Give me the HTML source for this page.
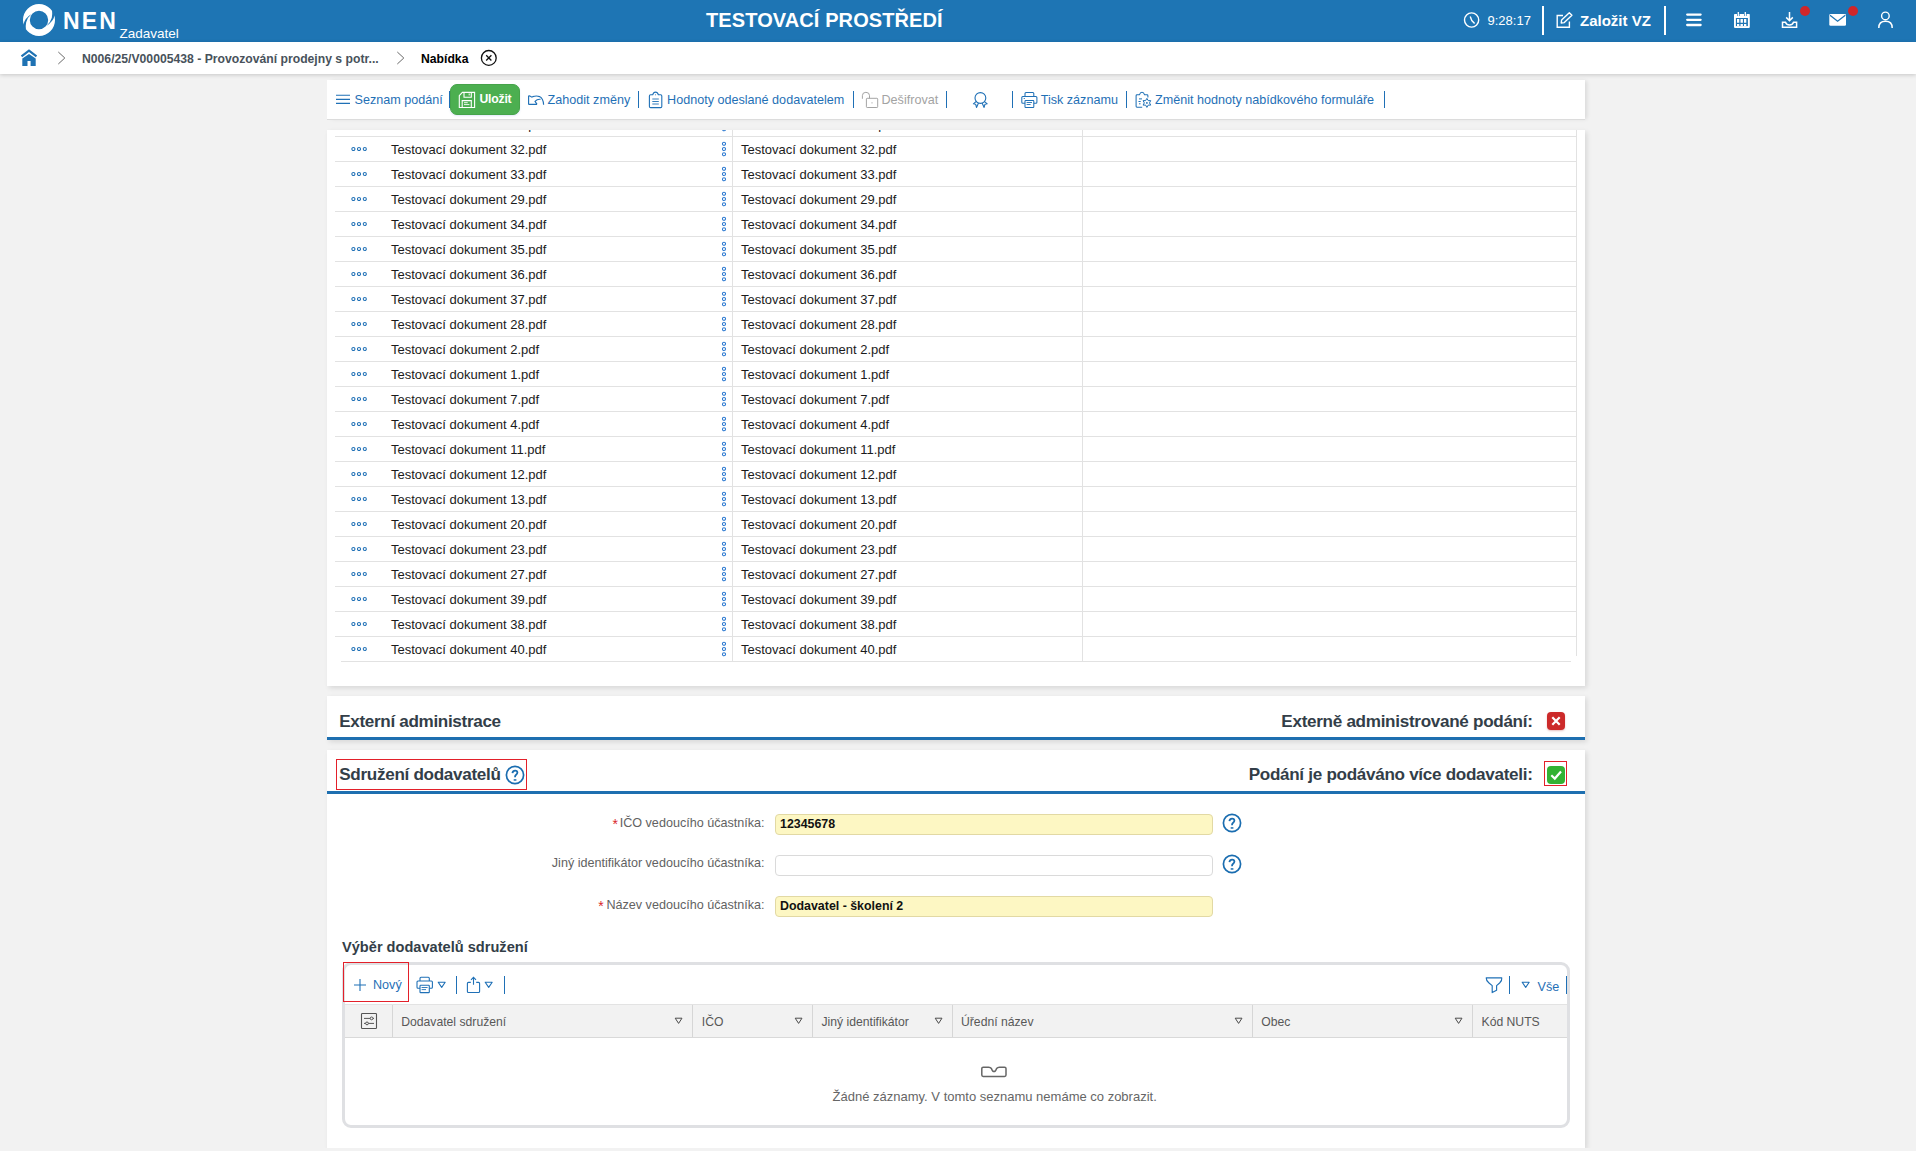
<!DOCTYPE html>
<html><head><meta charset="utf-8">
<style>
*{box-sizing:border-box}
html,body{margin:0;padding:0}
body{width:1916px;height:1151px;overflow:hidden;position:relative;background:#f2f2f2;font-family:"Liberation Sans",sans-serif;color:#1a1a1a}
.a{position:absolute;white-space:nowrap}
svg{position:absolute;overflow:visible}
#hdr{left:0;top:0;width:1916px;height:42px;background:#1e75b4}
#bc{left:0;top:42px;width:1916px;height:32px;background:#fff;box-shadow:0 1px 4px rgba(0,0,0,.18)}
.panel{position:absolute;background:#fff;box-shadow:2px 2px 5px rgba(0,0,0,.11)}
.tb{font-size:12.6px;color:#1f70b6;line-height:12.6px;margin-top:1px}
.sep{position:absolute;width:1px;background:#1f70b6}
.hl{position:absolute;height:1px;background:#e2e2e2}
.vl{position:absolute;width:1px;background:#e2e2e2}
.cell{font-size:13px;color:#1b1b1b;line-height:13px}
</style></head><body>
<div id="hdr" class="a">
<svg style="left:0;top:0" width="70" height="42" viewBox="0 0 70 42">
<circle cx="39" cy="20" r="12.6" fill="none" stroke="#fff" stroke-width="6.8"/>
<path d="M20 23.2 L23.2 24.7 Q25.2 17.8 31.6 14.1 Q27.4 17.6 26.2 22.2 Q25.5 25.6 25.9 28.8 L21 31 Z" fill="#1e75b4"/>
<path d="M58 16.8 L54.8 15.3 Q52.8 22.2 46.4 25.9 Q50.6 22.4 51.8 17.8 Q52.5 14.4 52.1 11.2 L57 9 Z" fill="#1e75b4"/>
</svg>
<div class="a" style="left:63px;top:10.4px;font-size:23px;line-height:23px;font-weight:700;color:#fff;letter-spacing:2.2px">NEN</div>
<div class="a" style="left:119.5px;top:26.9px;font-size:13.5px;line-height:13.5px;color:#fff">Zadavatel</div>
<div class="a" style="left:706px;top:10.1px;font-size:20px;line-height:20px;font-weight:700;color:#fff;letter-spacing:0.1px">TESTOVACÍ PROSTŘEDÍ</div>
<svg style="left:1463px;top:12px" width="18" height="18" viewBox="0 0 18 18"><circle cx="8.6" cy="8" r="7.1" fill="none" stroke="#fff" stroke-width="1.4"/><path d="M7.2 4.6 L8.8 8.6 L11.6 11.4" fill="none" stroke="#fff" stroke-width="1.4"/></svg>
<div class="a" style="left:1487.5px;top:14.1px;font-size:13px;line-height:13px;color:#fff">9:28:17</div>
<div class="a" style="left:1542px;top:6px;width:2px;height:29px;background:#fff"></div>
<svg style="left:1556px;top:12px" width="18" height="17" viewBox="0 0 18 17"><path d="M7 3.5 H1.2 V15.3 H13.4 V9.5" fill="none" stroke="#fff" stroke-width="1.4"/><path d="M5.2 11 L5.6 8 L13.3 0.8 L15.9 3.3 L8.3 10.6 Z" fill="none" stroke="#fff" stroke-width="1.4" stroke-linejoin="round"/></svg>
<div class="a" style="left:1580px;top:13.3px;font-size:15px;line-height:15px;font-weight:700;color:#fff">Založit VZ</div>
<div class="a" style="left:1664px;top:6px;width:2px;height:29px;background:#fff"></div>
<svg style="left:1686px;top:13px" width="17" height="14" viewBox="0 0 17 14"><path d="M1.2 1.6 H14.6 M1.2 6.8 H14.6 M1.2 12 H14.6" stroke="#fff" stroke-width="2.3" stroke-linecap="round"/></svg>
<svg style="left:1728px;top:6px" width="28" height="26" viewBox="0 0 28 26"><path d="M6.8 7.9 H21 Q21.8 7.9 21.8 8.7 V21.1 Q21.8 21.9 21 21.9 H6.8 Q6 21.9 6 21.1 V8.7 Q6 7.9 6.8 7.9 Z" fill="#fff"/><rect x="7.9" y="12" width="12" height="8.1" fill="#1e75b4"/><path d="M9 13.1h2.3v3.6h-2.3zM12.5 13.1h2.4v3.6h-2.4zM16 13.1h2.3v3.6h-2.3zM9 18h2.3v2.1h-2.3zM12.5 18h2.4v2.1h-2.4zM16 18h2.3v2.1h-2.3z" fill="#fff"/><path d="M10.3 6.1 V9.9 M17.3 6.1 V9.9" stroke="#1e75b4" stroke-width="2.6"/><path d="M10.3 6.1 V9.9 M17.3 6.1 V9.9" stroke="#fff" stroke-width="1.3"/></svg>
<svg style="left:1781px;top:11px" width="18" height="18" viewBox="0 0 18 18"><path d="M8.5 1 V9.6 M5.2 6.4 L8.5 9.7 L11.8 6.4" fill="none" stroke="#fff" stroke-width="1.5"/><path d="M1.5 10.6 V16.2 H15.6 V10.6 M1.5 11.3 H4.5 Q5.5 14 8.5 14 Q11.5 14 12.5 11.3 H15.6" fill="none" stroke="#fff" stroke-width="1.5"/></svg>
<div class="a" style="left:1800px;top:6px;width:10px;height:10px;border-radius:50%;background:#d0262a"></div>
<svg style="left:1829px;top:14px" width="18" height="13" viewBox="0 0 18 13"><rect x="0.3" y="0" width="16.7" height="11.8" rx="1.3" fill="#fff"/><path d="M1 1.2 L8.6 7.2 L16.3 1.2" fill="none" stroke="#1e75b4" stroke-width="1.3"/></svg>
<div class="a" style="left:1848px;top:6px;width:10px;height:10px;border-radius:50%;background:#d0262a"></div>
<svg style="left:1872px;top:6px" width="28" height="26" viewBox="0 0 28 26"><circle cx="13.4" cy="9.9" r="3.8" fill="none" stroke="#fff" stroke-width="1.4"/><path d="M6.8 21.9 Q6.8 15.3 13.5 15.3 Q20.2 15.3 20.2 21.9" fill="none" stroke="#fff" stroke-width="1.5"/></svg>
</div>
<div id="bc" class="a"></div>
<svg style="left:20px;top:49px" width="18" height="18" viewBox="0 0 18 18"><path d="M1.5 7.4 L9 1.6 L16.5 7.4" fill="none" stroke="#1e72b3" stroke-width="2.1" stroke-linejoin="miter"/><path d="M2.3 9.6 L9 4.9 L15.7 9.6 V16.9 H10.6 V12 H7.5 V16.9 H2.3 Z" fill="#1e72b3"/></svg>
<svg style="left:57px;top:51px" width="10" height="14" viewBox="0 0 10 14"><path d="M1.3 1 L7.8 7 L1.3 13" fill="none" stroke="#6a6a6a" stroke-width="1"/></svg>
<div class="a" style="left:82px;top:53.2px;font-size:12.2px;line-height:12.2px;font-weight:700;color:#48525b">N006/25/V00005438 - Provozování prodejny s potr...</div>
<svg style="left:396px;top:51px" width="10" height="14" viewBox="0 0 10 14"><path d="M1.3 1 L7.8 7 L1.3 13" fill="none" stroke="#6a6a6a" stroke-width="1"/></svg>
<div class="a" style="left:421px;top:53.2px;font-size:12.2px;line-height:12.2px;font-weight:700;color:#000">Nabídka</div>
<svg style="left:480px;top:49px" width="18" height="18" viewBox="0 0 18 18"><circle cx="8.8" cy="8.9" r="7.4" fill="none" stroke="#111" stroke-width="1.3"/><path d="M6.2 6.3 L11.4 11.5 M11.4 6.3 L6.2 11.5" stroke="#111" stroke-width="1.3"/></svg>


<!-- toolbar panel -->
<div class="panel" style="left:327px;top:80px;width:1258px;height:40px;border-bottom:1px solid #dcdcdc;box-shadow:3px 0 4px -1px rgba(0,0,0,.1)"></div>

<!-- toolbar content -->
<svg style="left:335px;top:94px" width="16" height="11" viewBox="0 0 16 11"><path d="M1 1.3 H15 M1 5.4 H15 M1 9.4 H15" stroke="#1f70b6" stroke-width="1.1"/></svg>
<div class="a tb" style="left:354.6px;top:93.1px">Seznam podání</div>
<div class="sep" style="left:449px;top:91px;height:17px"></div>
<div class="a" style="left:450px;top:84px;width:70px;height:31px;background:#4caf50;border:1px solid #46a34a;border-radius:7px;box-shadow:0 1px 2px rgba(60,100,200,.15)"></div>
<svg style="left:458px;top:91px" width="18" height="18" viewBox="0 0 18 18"><path d="M1.3 4.7 L4.4 1.4 H16.6 V16.5 H1.3 Z" fill="none" stroke="#fff" stroke-width="1.1"/><path d="M6 1.4 V6.2 H13.3 V1.4" fill="none" stroke="#fff" stroke-width="1.1"/><path d="M11.2 2.5 V4.4" stroke="#fff" stroke-width="1"/><path d="M4.2 16.5 V9.6 H13.3 V16.5" fill="none" stroke="#fff" stroke-width="1.1"/><path d="M6 11.7 H9.7 M6 13.6 H11.4" stroke="#fff" stroke-width="0.9"/></svg>
<div class="a" style="left:479.5px;top:93.1px;font-size:12.2px;line-height:12.2px;font-weight:700;color:#fff;letter-spacing:-0.2px">Uložit</div>
<svg style="left:524px;top:86px" width="24" height="26" viewBox="0 0 24 26"><path d="M4.6 18.4 V10 Q5.6 9.6 6.6 10.4 Q7.6 11.6 8.8 10.6 Q12.5 9.4 15.5 10.6 Q19.3 12.4 19.6 18.8" fill="none" stroke="#1f70b6" stroke-width="1.15" stroke-linejoin="round"/><path d="M16.6 13.3 Q13.4 12.8 11 15.4 L12.8 17.8 L12.5 18.4 H4.6" fill="none" stroke="#1f70b6" stroke-width="1.15" stroke-linejoin="round"/></svg>
<div class="a tb" style="left:547.6px;top:93.1px">Zahodit změny</div>
<div class="sep" style="left:638px;top:91px;height:17px"></div>
<svg style="left:644px;top:86px" width="24" height="26" viewBox="0 0 24 26"><path d="M8.7 8.8 H6.6 Q5.4 8.8 5.4 10 V20.4 Q5.4 21.6 6.6 21.6 H16.6 Q17.8 21.6 17.8 20.4 V10 Q17.8 8.8 16.6 8.8 H14.4 Q13.6 6.1 11.5 6.1 Q9.5 6.1 8.7 8.8 Z" fill="none" stroke="#1f70b6" stroke-width="1.1" stroke-linejoin="round"/><circle cx="11.5" cy="8.7" r="0.5" fill="#1f70b6"/><path d="M8.3 13 H14.8 M8.3 15.5 H14.8 M8.3 18 H14.8" stroke="#1f70b6" stroke-width="0.9"/></svg>
<div class="a tb" style="left:667.1px;top:93.1px">Hodnoty odeslané dodavatelem</div>
<div class="sep" style="left:853px;top:91px;height:17px"></div>
<svg style="left:856px;top:86px" width="24" height="26" viewBox="0 0 24 26"><path d="M6.4 12.8 V9.6 Q6.4 6.3 9.9 6.3 Q13.5 6.3 13.5 9.6 V12.3" fill="none" stroke="#9a9a9a" stroke-width="0.9"/><rect x="10.4" y="12.3" width="11.3" height="9.2" rx="0.8" fill="none" stroke="#9a9a9a" stroke-width="0.9"/><path d="M16 16 V17.6" stroke="#b0b0b0" stroke-width="0.8"/></svg>
<div class="a tb" style="left:881.5px;top:93.1px;color:#a3a3a3">Dešifrovat</div>
<div class="sep" style="left:946px;top:91px;height:17px"></div>
<svg style="left:960px;top:86px" width="40" height="26" viewBox="0 0 40 26"><circle cx="20.4" cy="12" r="5.4" fill="none" stroke="#1f70b6" stroke-width="1.1"/><path d="M16.3 15.3 L13.4 17.8 L15.6 18.2 L16.5 21.4 L18.5 17" fill="none" stroke="#1f70b6" stroke-width="1.1" stroke-linejoin="round"/><path d="M24.3 15.3 L27.2 17.8 L25 18.2 L24.1 21.4 L22.1 17" fill="none" stroke="#1f70b6" stroke-width="1.1" stroke-linejoin="round"/></svg>
<div class="sep" style="left:1012px;top:91px;height:17px"></div>
<svg style="left:1016px;top:86px" width="24" height="26" viewBox="0 0 24 26"><path d="M9 10.2 V7.4 Q9 6.4 10 6.4 H16.8 Q17.8 6.4 17.8 7.4 V10.2" fill="none" stroke="#1f70b6" stroke-width="1.05"/><path d="M9 17.3 H6.8 Q5.8 17.3 5.8 16.3 V11.5 Q5.8 10.5 6.8 10.5 H19.9 Q20.9 10.5 20.9 11.5 V16.3 Q20.9 17.3 19.9 17.3 H17.8" fill="none" stroke="#1f70b6" stroke-width="1.05"/><rect x="9" y="14.5" width="8.8" height="7" rx="0.7" fill="none" stroke="#1f70b6" stroke-width="1.05"/><path d="M10.6 16.5 H16 M10.6 18.5 H14.6 M7.7 12.5 H8.9" stroke="#1f70b6" stroke-width="0.9"/></svg>
<div class="a tb" style="left:1040.7px;top:93.1px">Tisk záznamu</div>
<div class="sep" style="left:1126px;top:91px;height:17px"></div>
<svg style="left:1130px;top:86px" width="24" height="26" viewBox="0 0 24 26"><path d="M12.2 21.2 H7 Q6.1 21.2 6.1 20.3 V9.7 Q6.1 8.8 7 8.8 H9.4 Q10.2 6.3 12 6.3 Q13.8 6.3 14.6 8.8 H17 Q17.9 8.8 17.9 9.7 V11.6" fill="none" stroke="#1f70b6" stroke-width="1.05"/><path d="M9 12.9 H12 M8.5 15.5 H10.7 M9 17.8 H10.5" stroke="#1f70b6" stroke-width="1"/><path d="M16.9 12.4 L18.2 14.6 L20.7 14.6 L19.5 16.9 L20.7 19.1 L18.2 19.1 L16.9 21.4 L15.6 19.1 L13.1 19.1 L14.3 16.9 L13.1 14.6 L15.6 14.6 Z" fill="none" stroke="#1f70b6" stroke-width="1" stroke-linejoin="round"/><circle cx="16.9" cy="16.9" r="0.9" fill="#1f70b6"/></svg>
<div class="a tb" style="left:1155px;top:93.1px">Změnit hodnoty nabídkového formuláře</div>
<div class="sep" style="left:1384px;top:91px;height:17px"></div>
<!-- table panel -->
<div class="panel" style="left:327px;top:130px;width:1258px;height:556px"></div>
<div class="a" style="left:327px;top:130px;width:1258px;height:556px;overflow:hidden">
<div class="hl" style="left:8px;top:6px;width:1241px"></div>
<div class="hl" style="left:8px;top:31px;width:1241px"></div>
<div class="hl" style="left:8px;top:56px;width:1241px"></div>
<div class="hl" style="left:8px;top:81px;width:1241px"></div>
<div class="hl" style="left:8px;top:106px;width:1241px"></div>
<div class="hl" style="left:8px;top:131px;width:1241px"></div>
<div class="hl" style="left:8px;top:156px;width:1241px"></div>
<div class="hl" style="left:8px;top:181px;width:1241px"></div>
<div class="hl" style="left:8px;top:206px;width:1241px"></div>
<div class="hl" style="left:8px;top:231px;width:1241px"></div>
<div class="hl" style="left:8px;top:256px;width:1241px"></div>
<div class="hl" style="left:8px;top:281px;width:1241px"></div>
<div class="hl" style="left:8px;top:306px;width:1241px"></div>
<div class="hl" style="left:8px;top:331px;width:1241px"></div>
<div class="hl" style="left:8px;top:356px;width:1241px"></div>
<div class="hl" style="left:8px;top:381px;width:1241px"></div>
<div class="hl" style="left:8px;top:406px;width:1241px"></div>
<div class="hl" style="left:8px;top:431px;width:1241px"></div>
<div class="hl" style="left:8px;top:456px;width:1241px"></div>
<div class="hl" style="left:8px;top:481px;width:1241px"></div>
<div class="hl" style="left:8px;top:506px;width:1241px"></div>
<div class="hl" style="left:14px;top:531px;width:1230px"></div>
<div class="vl" style="left:405px;top:0;height:531px"></div>
<div class="vl" style="left:755px;top:0;height:531px"></div>
<div class="vl" style="left:1249px;top:0;height:526px"></div>
<svg style="left:24px;top:-9px" width="17" height="6" viewBox="0 0 17 6"><circle cx="2.4" cy="3" r="1.55" fill="none" stroke="#1f70b6" stroke-width="1.05"/><circle cx="8" cy="3" r="1.55" fill="none" stroke="#1f70b6" stroke-width="1.05"/><circle cx="13.8" cy="3" r="1.55" fill="none" stroke="#1f70b6" stroke-width="1.05"/></svg>
<div class="a cell" style="left:64px;top:-12.3px">Testovací dokument 39.pdf</div>
<svg style="left:394px;top:-14px" width="6" height="16" viewBox="0 0 6 16"><circle cx="3" cy="2.7" r="1.55" fill="none" stroke="#2a78d0" stroke-width="1.05"/><circle cx="3" cy="8" r="1.55" fill="none" stroke="#2a78d0" stroke-width="1.05"/><circle cx="3" cy="13.2" r="1.55" fill="none" stroke="#2a78d0" stroke-width="1.05"/></svg>
<div class="a cell" style="left:414px;top:-12.3px">Testovací dokument 39.pdf</div>
<svg style="left:24px;top:16px" width="17" height="6" viewBox="0 0 17 6"><circle cx="2.4" cy="3" r="1.55" fill="none" stroke="#1f70b6" stroke-width="1.05"/><circle cx="8" cy="3" r="1.55" fill="none" stroke="#1f70b6" stroke-width="1.05"/><circle cx="13.8" cy="3" r="1.55" fill="none" stroke="#1f70b6" stroke-width="1.05"/></svg>
<div class="a cell" style="left:64px;top:12.7px">Testovací dokument 32.pdf</div>
<svg style="left:394px;top:11px" width="6" height="16" viewBox="0 0 6 16"><circle cx="3" cy="2.7" r="1.55" fill="none" stroke="#2a78d0" stroke-width="1.05"/><circle cx="3" cy="8" r="1.55" fill="none" stroke="#2a78d0" stroke-width="1.05"/><circle cx="3" cy="13.2" r="1.55" fill="none" stroke="#2a78d0" stroke-width="1.05"/></svg>
<div class="a cell" style="left:414px;top:12.7px">Testovací dokument 32.pdf</div>
<svg style="left:24px;top:41px" width="17" height="6" viewBox="0 0 17 6"><circle cx="2.4" cy="3" r="1.55" fill="none" stroke="#1f70b6" stroke-width="1.05"/><circle cx="8" cy="3" r="1.55" fill="none" stroke="#1f70b6" stroke-width="1.05"/><circle cx="13.8" cy="3" r="1.55" fill="none" stroke="#1f70b6" stroke-width="1.05"/></svg>
<div class="a cell" style="left:64px;top:37.7px">Testovací dokument 33.pdf</div>
<svg style="left:394px;top:36px" width="6" height="16" viewBox="0 0 6 16"><circle cx="3" cy="2.7" r="1.55" fill="none" stroke="#2a78d0" stroke-width="1.05"/><circle cx="3" cy="8" r="1.55" fill="none" stroke="#2a78d0" stroke-width="1.05"/><circle cx="3" cy="13.2" r="1.55" fill="none" stroke="#2a78d0" stroke-width="1.05"/></svg>
<div class="a cell" style="left:414px;top:37.7px">Testovací dokument 33.pdf</div>
<svg style="left:24px;top:66px" width="17" height="6" viewBox="0 0 17 6"><circle cx="2.4" cy="3" r="1.55" fill="none" stroke="#1f70b6" stroke-width="1.05"/><circle cx="8" cy="3" r="1.55" fill="none" stroke="#1f70b6" stroke-width="1.05"/><circle cx="13.8" cy="3" r="1.55" fill="none" stroke="#1f70b6" stroke-width="1.05"/></svg>
<div class="a cell" style="left:64px;top:62.7px">Testovací dokument 29.pdf</div>
<svg style="left:394px;top:61px" width="6" height="16" viewBox="0 0 6 16"><circle cx="3" cy="2.7" r="1.55" fill="none" stroke="#2a78d0" stroke-width="1.05"/><circle cx="3" cy="8" r="1.55" fill="none" stroke="#2a78d0" stroke-width="1.05"/><circle cx="3" cy="13.2" r="1.55" fill="none" stroke="#2a78d0" stroke-width="1.05"/></svg>
<div class="a cell" style="left:414px;top:62.7px">Testovací dokument 29.pdf</div>
<svg style="left:24px;top:91px" width="17" height="6" viewBox="0 0 17 6"><circle cx="2.4" cy="3" r="1.55" fill="none" stroke="#1f70b6" stroke-width="1.05"/><circle cx="8" cy="3" r="1.55" fill="none" stroke="#1f70b6" stroke-width="1.05"/><circle cx="13.8" cy="3" r="1.55" fill="none" stroke="#1f70b6" stroke-width="1.05"/></svg>
<div class="a cell" style="left:64px;top:87.7px">Testovací dokument 34.pdf</div>
<svg style="left:394px;top:86px" width="6" height="16" viewBox="0 0 6 16"><circle cx="3" cy="2.7" r="1.55" fill="none" stroke="#2a78d0" stroke-width="1.05"/><circle cx="3" cy="8" r="1.55" fill="none" stroke="#2a78d0" stroke-width="1.05"/><circle cx="3" cy="13.2" r="1.55" fill="none" stroke="#2a78d0" stroke-width="1.05"/></svg>
<div class="a cell" style="left:414px;top:87.7px">Testovací dokument 34.pdf</div>
<svg style="left:24px;top:116px" width="17" height="6" viewBox="0 0 17 6"><circle cx="2.4" cy="3" r="1.55" fill="none" stroke="#1f70b6" stroke-width="1.05"/><circle cx="8" cy="3" r="1.55" fill="none" stroke="#1f70b6" stroke-width="1.05"/><circle cx="13.8" cy="3" r="1.55" fill="none" stroke="#1f70b6" stroke-width="1.05"/></svg>
<div class="a cell" style="left:64px;top:112.7px">Testovací dokument 35.pdf</div>
<svg style="left:394px;top:111px" width="6" height="16" viewBox="0 0 6 16"><circle cx="3" cy="2.7" r="1.55" fill="none" stroke="#2a78d0" stroke-width="1.05"/><circle cx="3" cy="8" r="1.55" fill="none" stroke="#2a78d0" stroke-width="1.05"/><circle cx="3" cy="13.2" r="1.55" fill="none" stroke="#2a78d0" stroke-width="1.05"/></svg>
<div class="a cell" style="left:414px;top:112.7px">Testovací dokument 35.pdf</div>
<svg style="left:24px;top:141px" width="17" height="6" viewBox="0 0 17 6"><circle cx="2.4" cy="3" r="1.55" fill="none" stroke="#1f70b6" stroke-width="1.05"/><circle cx="8" cy="3" r="1.55" fill="none" stroke="#1f70b6" stroke-width="1.05"/><circle cx="13.8" cy="3" r="1.55" fill="none" stroke="#1f70b6" stroke-width="1.05"/></svg>
<div class="a cell" style="left:64px;top:137.7px">Testovací dokument 36.pdf</div>
<svg style="left:394px;top:136px" width="6" height="16" viewBox="0 0 6 16"><circle cx="3" cy="2.7" r="1.55" fill="none" stroke="#2a78d0" stroke-width="1.05"/><circle cx="3" cy="8" r="1.55" fill="none" stroke="#2a78d0" stroke-width="1.05"/><circle cx="3" cy="13.2" r="1.55" fill="none" stroke="#2a78d0" stroke-width="1.05"/></svg>
<div class="a cell" style="left:414px;top:137.7px">Testovací dokument 36.pdf</div>
<svg style="left:24px;top:166px" width="17" height="6" viewBox="0 0 17 6"><circle cx="2.4" cy="3" r="1.55" fill="none" stroke="#1f70b6" stroke-width="1.05"/><circle cx="8" cy="3" r="1.55" fill="none" stroke="#1f70b6" stroke-width="1.05"/><circle cx="13.8" cy="3" r="1.55" fill="none" stroke="#1f70b6" stroke-width="1.05"/></svg>
<div class="a cell" style="left:64px;top:162.7px">Testovací dokument 37.pdf</div>
<svg style="left:394px;top:161px" width="6" height="16" viewBox="0 0 6 16"><circle cx="3" cy="2.7" r="1.55" fill="none" stroke="#2a78d0" stroke-width="1.05"/><circle cx="3" cy="8" r="1.55" fill="none" stroke="#2a78d0" stroke-width="1.05"/><circle cx="3" cy="13.2" r="1.55" fill="none" stroke="#2a78d0" stroke-width="1.05"/></svg>
<div class="a cell" style="left:414px;top:162.7px">Testovací dokument 37.pdf</div>
<svg style="left:24px;top:191px" width="17" height="6" viewBox="0 0 17 6"><circle cx="2.4" cy="3" r="1.55" fill="none" stroke="#1f70b6" stroke-width="1.05"/><circle cx="8" cy="3" r="1.55" fill="none" stroke="#1f70b6" stroke-width="1.05"/><circle cx="13.8" cy="3" r="1.55" fill="none" stroke="#1f70b6" stroke-width="1.05"/></svg>
<div class="a cell" style="left:64px;top:187.7px">Testovací dokument 28.pdf</div>
<svg style="left:394px;top:186px" width="6" height="16" viewBox="0 0 6 16"><circle cx="3" cy="2.7" r="1.55" fill="none" stroke="#2a78d0" stroke-width="1.05"/><circle cx="3" cy="8" r="1.55" fill="none" stroke="#2a78d0" stroke-width="1.05"/><circle cx="3" cy="13.2" r="1.55" fill="none" stroke="#2a78d0" stroke-width="1.05"/></svg>
<div class="a cell" style="left:414px;top:187.7px">Testovací dokument 28.pdf</div>
<svg style="left:24px;top:216px" width="17" height="6" viewBox="0 0 17 6"><circle cx="2.4" cy="3" r="1.55" fill="none" stroke="#1f70b6" stroke-width="1.05"/><circle cx="8" cy="3" r="1.55" fill="none" stroke="#1f70b6" stroke-width="1.05"/><circle cx="13.8" cy="3" r="1.55" fill="none" stroke="#1f70b6" stroke-width="1.05"/></svg>
<div class="a cell" style="left:64px;top:212.7px">Testovací dokument 2.pdf</div>
<svg style="left:394px;top:211px" width="6" height="16" viewBox="0 0 6 16"><circle cx="3" cy="2.7" r="1.55" fill="none" stroke="#2a78d0" stroke-width="1.05"/><circle cx="3" cy="8" r="1.55" fill="none" stroke="#2a78d0" stroke-width="1.05"/><circle cx="3" cy="13.2" r="1.55" fill="none" stroke="#2a78d0" stroke-width="1.05"/></svg>
<div class="a cell" style="left:414px;top:212.7px">Testovací dokument 2.pdf</div>
<svg style="left:24px;top:241px" width="17" height="6" viewBox="0 0 17 6"><circle cx="2.4" cy="3" r="1.55" fill="none" stroke="#1f70b6" stroke-width="1.05"/><circle cx="8" cy="3" r="1.55" fill="none" stroke="#1f70b6" stroke-width="1.05"/><circle cx="13.8" cy="3" r="1.55" fill="none" stroke="#1f70b6" stroke-width="1.05"/></svg>
<div class="a cell" style="left:64px;top:237.7px">Testovací dokument 1.pdf</div>
<svg style="left:394px;top:236px" width="6" height="16" viewBox="0 0 6 16"><circle cx="3" cy="2.7" r="1.55" fill="none" stroke="#2a78d0" stroke-width="1.05"/><circle cx="3" cy="8" r="1.55" fill="none" stroke="#2a78d0" stroke-width="1.05"/><circle cx="3" cy="13.2" r="1.55" fill="none" stroke="#2a78d0" stroke-width="1.05"/></svg>
<div class="a cell" style="left:414px;top:237.7px">Testovací dokument 1.pdf</div>
<svg style="left:24px;top:266px" width="17" height="6" viewBox="0 0 17 6"><circle cx="2.4" cy="3" r="1.55" fill="none" stroke="#1f70b6" stroke-width="1.05"/><circle cx="8" cy="3" r="1.55" fill="none" stroke="#1f70b6" stroke-width="1.05"/><circle cx="13.8" cy="3" r="1.55" fill="none" stroke="#1f70b6" stroke-width="1.05"/></svg>
<div class="a cell" style="left:64px;top:262.7px">Testovací dokument 7.pdf</div>
<svg style="left:394px;top:261px" width="6" height="16" viewBox="0 0 6 16"><circle cx="3" cy="2.7" r="1.55" fill="none" stroke="#2a78d0" stroke-width="1.05"/><circle cx="3" cy="8" r="1.55" fill="none" stroke="#2a78d0" stroke-width="1.05"/><circle cx="3" cy="13.2" r="1.55" fill="none" stroke="#2a78d0" stroke-width="1.05"/></svg>
<div class="a cell" style="left:414px;top:262.7px">Testovací dokument 7.pdf</div>
<svg style="left:24px;top:291px" width="17" height="6" viewBox="0 0 17 6"><circle cx="2.4" cy="3" r="1.55" fill="none" stroke="#1f70b6" stroke-width="1.05"/><circle cx="8" cy="3" r="1.55" fill="none" stroke="#1f70b6" stroke-width="1.05"/><circle cx="13.8" cy="3" r="1.55" fill="none" stroke="#1f70b6" stroke-width="1.05"/></svg>
<div class="a cell" style="left:64px;top:287.7px">Testovací dokument 4.pdf</div>
<svg style="left:394px;top:286px" width="6" height="16" viewBox="0 0 6 16"><circle cx="3" cy="2.7" r="1.55" fill="none" stroke="#2a78d0" stroke-width="1.05"/><circle cx="3" cy="8" r="1.55" fill="none" stroke="#2a78d0" stroke-width="1.05"/><circle cx="3" cy="13.2" r="1.55" fill="none" stroke="#2a78d0" stroke-width="1.05"/></svg>
<div class="a cell" style="left:414px;top:287.7px">Testovací dokument 4.pdf</div>
<svg style="left:24px;top:316px" width="17" height="6" viewBox="0 0 17 6"><circle cx="2.4" cy="3" r="1.55" fill="none" stroke="#1f70b6" stroke-width="1.05"/><circle cx="8" cy="3" r="1.55" fill="none" stroke="#1f70b6" stroke-width="1.05"/><circle cx="13.8" cy="3" r="1.55" fill="none" stroke="#1f70b6" stroke-width="1.05"/></svg>
<div class="a cell" style="left:64px;top:312.7px">Testovací dokument 11.pdf</div>
<svg style="left:394px;top:311px" width="6" height="16" viewBox="0 0 6 16"><circle cx="3" cy="2.7" r="1.55" fill="none" stroke="#2a78d0" stroke-width="1.05"/><circle cx="3" cy="8" r="1.55" fill="none" stroke="#2a78d0" stroke-width="1.05"/><circle cx="3" cy="13.2" r="1.55" fill="none" stroke="#2a78d0" stroke-width="1.05"/></svg>
<div class="a cell" style="left:414px;top:312.7px">Testovací dokument 11.pdf</div>
<svg style="left:24px;top:341px" width="17" height="6" viewBox="0 0 17 6"><circle cx="2.4" cy="3" r="1.55" fill="none" stroke="#1f70b6" stroke-width="1.05"/><circle cx="8" cy="3" r="1.55" fill="none" stroke="#1f70b6" stroke-width="1.05"/><circle cx="13.8" cy="3" r="1.55" fill="none" stroke="#1f70b6" stroke-width="1.05"/></svg>
<div class="a cell" style="left:64px;top:337.7px">Testovací dokument 12.pdf</div>
<svg style="left:394px;top:336px" width="6" height="16" viewBox="0 0 6 16"><circle cx="3" cy="2.7" r="1.55" fill="none" stroke="#2a78d0" stroke-width="1.05"/><circle cx="3" cy="8" r="1.55" fill="none" stroke="#2a78d0" stroke-width="1.05"/><circle cx="3" cy="13.2" r="1.55" fill="none" stroke="#2a78d0" stroke-width="1.05"/></svg>
<div class="a cell" style="left:414px;top:337.7px">Testovací dokument 12.pdf</div>
<svg style="left:24px;top:366px" width="17" height="6" viewBox="0 0 17 6"><circle cx="2.4" cy="3" r="1.55" fill="none" stroke="#1f70b6" stroke-width="1.05"/><circle cx="8" cy="3" r="1.55" fill="none" stroke="#1f70b6" stroke-width="1.05"/><circle cx="13.8" cy="3" r="1.55" fill="none" stroke="#1f70b6" stroke-width="1.05"/></svg>
<div class="a cell" style="left:64px;top:362.7px">Testovací dokument 13.pdf</div>
<svg style="left:394px;top:361px" width="6" height="16" viewBox="0 0 6 16"><circle cx="3" cy="2.7" r="1.55" fill="none" stroke="#2a78d0" stroke-width="1.05"/><circle cx="3" cy="8" r="1.55" fill="none" stroke="#2a78d0" stroke-width="1.05"/><circle cx="3" cy="13.2" r="1.55" fill="none" stroke="#2a78d0" stroke-width="1.05"/></svg>
<div class="a cell" style="left:414px;top:362.7px">Testovací dokument 13.pdf</div>
<svg style="left:24px;top:391px" width="17" height="6" viewBox="0 0 17 6"><circle cx="2.4" cy="3" r="1.55" fill="none" stroke="#1f70b6" stroke-width="1.05"/><circle cx="8" cy="3" r="1.55" fill="none" stroke="#1f70b6" stroke-width="1.05"/><circle cx="13.8" cy="3" r="1.55" fill="none" stroke="#1f70b6" stroke-width="1.05"/></svg>
<div class="a cell" style="left:64px;top:387.7px">Testovací dokument 20.pdf</div>
<svg style="left:394px;top:386px" width="6" height="16" viewBox="0 0 6 16"><circle cx="3" cy="2.7" r="1.55" fill="none" stroke="#2a78d0" stroke-width="1.05"/><circle cx="3" cy="8" r="1.55" fill="none" stroke="#2a78d0" stroke-width="1.05"/><circle cx="3" cy="13.2" r="1.55" fill="none" stroke="#2a78d0" stroke-width="1.05"/></svg>
<div class="a cell" style="left:414px;top:387.7px">Testovací dokument 20.pdf</div>
<svg style="left:24px;top:416px" width="17" height="6" viewBox="0 0 17 6"><circle cx="2.4" cy="3" r="1.55" fill="none" stroke="#1f70b6" stroke-width="1.05"/><circle cx="8" cy="3" r="1.55" fill="none" stroke="#1f70b6" stroke-width="1.05"/><circle cx="13.8" cy="3" r="1.55" fill="none" stroke="#1f70b6" stroke-width="1.05"/></svg>
<div class="a cell" style="left:64px;top:412.7px">Testovací dokument 23.pdf</div>
<svg style="left:394px;top:411px" width="6" height="16" viewBox="0 0 6 16"><circle cx="3" cy="2.7" r="1.55" fill="none" stroke="#2a78d0" stroke-width="1.05"/><circle cx="3" cy="8" r="1.55" fill="none" stroke="#2a78d0" stroke-width="1.05"/><circle cx="3" cy="13.2" r="1.55" fill="none" stroke="#2a78d0" stroke-width="1.05"/></svg>
<div class="a cell" style="left:414px;top:412.7px">Testovací dokument 23.pdf</div>
<svg style="left:24px;top:441px" width="17" height="6" viewBox="0 0 17 6"><circle cx="2.4" cy="3" r="1.55" fill="none" stroke="#1f70b6" stroke-width="1.05"/><circle cx="8" cy="3" r="1.55" fill="none" stroke="#1f70b6" stroke-width="1.05"/><circle cx="13.8" cy="3" r="1.55" fill="none" stroke="#1f70b6" stroke-width="1.05"/></svg>
<div class="a cell" style="left:64px;top:437.7px">Testovací dokument 27.pdf</div>
<svg style="left:394px;top:436px" width="6" height="16" viewBox="0 0 6 16"><circle cx="3" cy="2.7" r="1.55" fill="none" stroke="#2a78d0" stroke-width="1.05"/><circle cx="3" cy="8" r="1.55" fill="none" stroke="#2a78d0" stroke-width="1.05"/><circle cx="3" cy="13.2" r="1.55" fill="none" stroke="#2a78d0" stroke-width="1.05"/></svg>
<div class="a cell" style="left:414px;top:437.7px">Testovací dokument 27.pdf</div>
<svg style="left:24px;top:466px" width="17" height="6" viewBox="0 0 17 6"><circle cx="2.4" cy="3" r="1.55" fill="none" stroke="#1f70b6" stroke-width="1.05"/><circle cx="8" cy="3" r="1.55" fill="none" stroke="#1f70b6" stroke-width="1.05"/><circle cx="13.8" cy="3" r="1.55" fill="none" stroke="#1f70b6" stroke-width="1.05"/></svg>
<div class="a cell" style="left:64px;top:462.7px">Testovací dokument 39.pdf</div>
<svg style="left:394px;top:461px" width="6" height="16" viewBox="0 0 6 16"><circle cx="3" cy="2.7" r="1.55" fill="none" stroke="#2a78d0" stroke-width="1.05"/><circle cx="3" cy="8" r="1.55" fill="none" stroke="#2a78d0" stroke-width="1.05"/><circle cx="3" cy="13.2" r="1.55" fill="none" stroke="#2a78d0" stroke-width="1.05"/></svg>
<div class="a cell" style="left:414px;top:462.7px">Testovací dokument 39.pdf</div>
<svg style="left:24px;top:491px" width="17" height="6" viewBox="0 0 17 6"><circle cx="2.4" cy="3" r="1.55" fill="none" stroke="#1f70b6" stroke-width="1.05"/><circle cx="8" cy="3" r="1.55" fill="none" stroke="#1f70b6" stroke-width="1.05"/><circle cx="13.8" cy="3" r="1.55" fill="none" stroke="#1f70b6" stroke-width="1.05"/></svg>
<div class="a cell" style="left:64px;top:487.7px">Testovací dokument 38.pdf</div>
<svg style="left:394px;top:486px" width="6" height="16" viewBox="0 0 6 16"><circle cx="3" cy="2.7" r="1.55" fill="none" stroke="#2a78d0" stroke-width="1.05"/><circle cx="3" cy="8" r="1.55" fill="none" stroke="#2a78d0" stroke-width="1.05"/><circle cx="3" cy="13.2" r="1.55" fill="none" stroke="#2a78d0" stroke-width="1.05"/></svg>
<div class="a cell" style="left:414px;top:487.7px">Testovací dokument 38.pdf</div>
<svg style="left:24px;top:516px" width="17" height="6" viewBox="0 0 17 6"><circle cx="2.4" cy="3" r="1.55" fill="none" stroke="#1f70b6" stroke-width="1.05"/><circle cx="8" cy="3" r="1.55" fill="none" stroke="#1f70b6" stroke-width="1.05"/><circle cx="13.8" cy="3" r="1.55" fill="none" stroke="#1f70b6" stroke-width="1.05"/></svg>
<div class="a cell" style="left:64px;top:512.7px">Testovací dokument 40.pdf</div>
<svg style="left:394px;top:511px" width="6" height="16" viewBox="0 0 6 16"><circle cx="3" cy="2.7" r="1.55" fill="none" stroke="#2a78d0" stroke-width="1.05"/><circle cx="3" cy="8" r="1.55" fill="none" stroke="#2a78d0" stroke-width="1.05"/><circle cx="3" cy="13.2" r="1.55" fill="none" stroke="#2a78d0" stroke-width="1.05"/></svg>
<div class="a cell" style="left:414px;top:512.7px">Testovací dokument 40.pdf</div>
</div>
<!-- ext admin panel -->
<div class="panel" style="left:327px;top:696px;width:1258px;height:44px;border-bottom:3px solid #1e6fb0"></div>
<!-- sdruzeni panel -->
<div class="panel" style="left:327px;top:750px;width:1258px;height:398px"></div>
<div class="a" style="left:327px;top:791px;width:1258px;height:3px;background:#1e6fb0"></div>

<div class="a" style="left:339.2px;top:712.62px;font-size:17.1px;line-height:17.1px;font-weight:700;color:#333e48;letter-spacing:-0.33px">Externí administrace</div>
<div class="a" style="right:383.4000000000001px;top:712.62px;font-size:17.1px;line-height:17.1px;font-weight:700;color:#333e48;letter-spacing:-0.3px;text-align:right">Externě administrované podání:</div>
<div class="a" style="left:1547px;top:712px;width:18px;height:18px;border-radius:4px;background:#cc2a2a;box-shadow:0 1px 2px rgba(150,0,0,.25)"></div>
<svg style="left:1547px;top:712px" width="18" height="18" viewBox="0 0 18 18"><path d="M5.3 5.3 L12.7 12.7 M12.7 5.3 L5.3 12.7" stroke="#fff" stroke-width="2.2"/></svg>
<div class="a" style="left:339.2px;top:766.42px;font-size:17.1px;line-height:17.1px;font-weight:700;color:#333e48;letter-spacing:-0.3px">Sdružení dodavatelů</div>
<div class="a" style="left:336px;top:759px;width:191px;height:31px;border:1px solid #e3202a"></div>
<svg style="left:503.9px;top:764px" width="22" height="22" viewBox="0 0 22 22"><circle cx="11" cy="11" r="8.6" fill="none" stroke="#1a6db0" stroke-width="1.7"/><path d="M8.4 9.2 Q8.9 6.6 11.1 6.6 Q13.4 6.6 13.4 8.6 Q13.4 9.8 12.1 10.7 Q11 11.5 11 13.2" fill="none" stroke="#1a6db0" stroke-width="1.8"/><rect x="9.7" y="15.2" width="2.7" height="1.5" fill="#1a6db0"/></svg>
<div class="a" style="right:383.4000000000001px;top:766.42px;font-size:17.1px;line-height:17.1px;font-weight:700;color:#333e48;letter-spacing:-0.3px;text-align:right">Podání je podáváno více dodavateli:</div>
<div class="a" style="left:1544px;top:761px;width:23px;height:25px;border:1px solid #e3202a"></div>
<div class="a" style="left:1547px;top:766px;width:18px;height:18px;border-radius:4px;background:#33b233"></div>
<svg style="left:1547px;top:766px" width="18" height="18" viewBox="0 0 18 18"><path d="M4.3 9.3 L7.8 12.6 L14 5.6" fill="none" stroke="#fff" stroke-width="2.2"/></svg>
<div class="a" style="right:1151.4px;top:816.63px;font-size:12.6px;line-height:12.6px;font-weight:400;color:#626262;letter-spacing:0px;text-align:right">IČO vedoucího účastníka:</div>
<div class="a" style="right:1151.4px;top:856.93px;font-size:12.6px;line-height:12.6px;font-weight:400;color:#626262;letter-spacing:0px;text-align:right">Jiný identifikátor vedoucího účastníka:</div>
<div class="a" style="right:1151.4px;top:898.53px;font-size:12.6px;line-height:12.6px;font-weight:400;color:#626262;letter-spacing:0px;text-align:right">Název vedoucího účastníka:</div>
<div class="a" style="left:612.6px;top:816.6px;font-size:14px;line-height:14px;color:#d9262b">*</div>
<div class="a" style="left:598.2px;top:898.6px;font-size:14px;line-height:14px;color:#d9262b">*</div>
<div class="a" style="left:775px;top:814px;width:438px;height:21px;border:1px solid #e2d9a4;border-radius:4px;background:#fdf7c3"></div>
<div class="a" style="left:775px;top:855px;width:438px;height:21px;border:1px solid #dadada;border-radius:4px;background:#fff"></div>
<div class="a" style="left:775px;top:896px;width:438px;height:21px;border:1px solid #e2d9a4;border-radius:4px;background:#fdf7c3"></div>
<div class="a" style="left:780px;top:818.30px;font-size:12.4px;line-height:12.4px;font-weight:700;color:#111;letter-spacing:0px">12345678</div>
<div class="a" style="left:780px;top:900.30px;font-size:12.4px;line-height:12.4px;font-weight:700;color:#111;letter-spacing:0px">Dodavatel - školení 2</div>
<svg style="left:1221.4px;top:811.9px" width="22" height="22" viewBox="0 0 22 22"><circle cx="11" cy="11" r="8.6" fill="none" stroke="#1a6db0" stroke-width="1.7"/><path d="M8.4 9.2 Q8.9 6.6 11.1 6.6 Q13.4 6.6 13.4 8.6 Q13.4 9.8 12.1 10.7 Q11 11.5 11 13.2" fill="none" stroke="#1a6db0" stroke-width="1.8"/><rect x="9.7" y="15.2" width="2.7" height="1.5" fill="#1a6db0"/></svg>
<svg style="left:1221.4px;top:852.9px" width="22" height="22" viewBox="0 0 22 22"><circle cx="11" cy="11" r="8.6" fill="none" stroke="#1a6db0" stroke-width="1.7"/><path d="M8.4 9.2 Q8.9 6.6 11.1 6.6 Q13.4 6.6 13.4 8.6 Q13.4 9.8 12.1 10.7 Q11 11.5 11 13.2" fill="none" stroke="#1a6db0" stroke-width="1.8"/><rect x="9.7" y="15.2" width="2.7" height="1.5" fill="#1a6db0"/></svg>
<div class="a" style="left:342px;top:940.34px;font-size:14.6px;line-height:14.6px;font-weight:700;color:#333e48;letter-spacing:0px">Výběr dodavatelů sdružení</div>
<div class="a" style="left:342px;top:962px;width:1228px;height:166px;border:3px solid #dfe0e3;border-radius:9px;background:#fff"></div>
<div class="a" style="left:343px;top:962px;width:66px;height:40px;border:1px solid #e3202a"></div>
<svg style="left:353px;top:978px" width="14" height="14" viewBox="0 0 14 14"><path d="M7 1 V13 M1 7 H13" stroke="#1f70b6" stroke-width="1.1"/></svg>
<div class="a" style="left:373px;top:979.23px;font-size:12.6px;line-height:12.6px;font-weight:400;color:#1f70b6;letter-spacing:0px">Nový</div>
<svg style="left:416px;top:976px" width="18" height="18" viewBox="0 0 18 18"><path d="M4 5 V2.3 Q4 1.3 5 1.3 H12.3 Q13.3 1.3 13.3 2.3 V5" fill="none" stroke="#1f70b6" stroke-width="1.1"/><path d="M4 12.3 H2 Q1 12.3 1 11.3 V6 Q1 5 2 5 H15.4 Q16.4 5 16.4 6 V11.3 Q16.4 12.3 15.4 12.3 H13.3" fill="none" stroke="#1f70b6" stroke-width="1.1"/><rect x="4" y="9.3" width="9.3" height="7.3" rx="0.7" fill="none" stroke="#1f70b6" stroke-width="1.1"/><path d="M5.6 11.5 H11.6 M5.6 13.6 H10" stroke="#1f70b6" stroke-width="0.9"/></svg>
<svg style="left:436.6px;top:980.8px" width="9.4" height="7.8" viewBox="0 0 9.4 7.8"><path d="M1.2 1.2 H8.200000000000001 L4.7 6.3999999999999995 Z" fill="none" stroke="#1f70b6" stroke-width="1.1" stroke-linejoin="round"/></svg>
<div class="sep" style="left:456px;top:976px;height:18px"></div>
<svg style="left:465px;top:976px" width="17" height="18" viewBox="0 0 17 18"><path d="M5.8 6.4 H3.4 Q2.4 6.4 2.4 7.4 V15.5 Q2.4 16.5 3.4 16.5 H13.6 Q14.6 16.5 14.6 15.5 V7.4 Q14.6 6.4 13.6 6.4 H11.2" fill="none" stroke="#1f70b6" stroke-width="1.1"/><path d="M8.5 1.4 V8.8 M6 3.9 L8.5 1.3 L11 3.9" fill="none" stroke="#1f70b6" stroke-width="1.1"/></svg>
<svg style="left:484.3px;top:981.2px" width="9.4" height="7.8" viewBox="0 0 9.4 7.8"><path d="M1.2 1.2 H8.200000000000001 L4.7 6.3999999999999995 Z" fill="none" stroke="#1f70b6" stroke-width="1.1" stroke-linejoin="round"/></svg>
<div class="sep" style="left:504px;top:976px;height:18px"></div>
<svg style="left:1484px;top:976px" width="20" height="18" viewBox="0 0 20 18"><path d="M2.2 1.8 H17.8 Q18.2 4.6 15.6 7 L12.6 9.6 V14.2 L8.2 16.6 V9.6 L5 7 Q2 4.6 2.2 1.8 Z" fill="none" stroke="#1f70b6" stroke-width="1.15" stroke-linejoin="round"/></svg>
<div class="sep" style="left:1509px;top:976px;height:18px"></div>
<svg style="left:1521.3px;top:981px" width="9.4" height="7.8" viewBox="0 0 9.4 7.8"><path d="M1.2 1.2 H8.200000000000001 L4.7 6.3999999999999995 Z" fill="none" stroke="#1f70b6" stroke-width="1.1" stroke-linejoin="round"/></svg>
<div class="a" style="left:1537.5px;top:980.93px;font-size:12.6px;line-height:12.6px;font-weight:400;color:#1f70b6;letter-spacing:0px">Vše</div>
<div class="sep" style="left:1566px;top:976px;height:18px"></div>
<div class="a" style="left:345px;top:1004px;width:1222px;height:34px;background:#f2f2f2;border-top:1px solid #e3e3e3;border-bottom:1px solid #d9d9d9"></div>
<div class="a" style="left:392px;top:1005px;width:1px;height:32px;background:#d6d6d6"></div>
<div class="a" style="left:692px;top:1005px;width:1px;height:32px;background:#d6d6d6"></div>
<div class="a" style="left:812px;top:1005px;width:1px;height:32px;background:#d6d6d6"></div>
<div class="a" style="left:952px;top:1005px;width:1px;height:32px;background:#d6d6d6"></div>
<div class="a" style="left:1252px;top:1005px;width:1px;height:32px;background:#d6d6d6"></div>
<div class="a" style="left:1472px;top:1005px;width:1px;height:32px;background:#d6d6d6"></div>
<svg style="left:360px;top:1012px" width="18" height="18" viewBox="0 0 18 18"><rect x="1.5" y="1.5" width="15" height="15" rx="0.8" fill="none" stroke="#555" stroke-width="1.1"/><path d="M4 6.4 H14 M4 11.4 H14" stroke="#555" stroke-width="1"/><circle cx="11.6" cy="6.4" r="1.4" fill="#f2f2f2" stroke="#555" stroke-width="1"/><circle cx="7" cy="11.4" r="1.4" fill="#f2f2f2" stroke="#555" stroke-width="1"/></svg>
<div class="a" style="left:401.2px;top:1016.0px;font-size:12.2px;line-height:12.2px;font-weight:400;color:#585858;letter-spacing:0px">Dodavatel sdružení</div>
<div class="a" style="left:701.8px;top:1016.0px;font-size:12.2px;line-height:12.2px;font-weight:400;color:#585858;letter-spacing:0px">IČO</div>
<div class="a" style="left:821.4px;top:1016.0px;font-size:12.2px;line-height:12.2px;font-weight:400;color:#585858;letter-spacing:0px">Jiný identifikátor</div>
<div class="a" style="left:961px;top:1016.0px;font-size:12.2px;line-height:12.2px;font-weight:400;color:#585858;letter-spacing:0px">Úřední název</div>
<div class="a" style="left:1261.2px;top:1016.0px;font-size:12.2px;line-height:12.2px;font-weight:400;color:#585858;letter-spacing:0px">Obec</div>
<div class="a" style="left:1481.5px;top:1016.0px;font-size:12.2px;line-height:12.2px;font-weight:400;color:#585858;letter-spacing:0px">Kód NUTS</div>
<svg style="left:674.3px;top:1016.8px" width="9.2" height="7.8" viewBox="0 0 9.2 7.8"><path d="M1.2 1.2 H8.0 L4.6 6.3999999999999995 Z" fill="none" stroke="#4a4a4a" stroke-width="1" stroke-linejoin="round"/></svg>
<svg style="left:794.3px;top:1016.8px" width="9.2" height="7.8" viewBox="0 0 9.2 7.8"><path d="M1.2 1.2 H8.0 L4.6 6.3999999999999995 Z" fill="none" stroke="#4a4a4a" stroke-width="1" stroke-linejoin="round"/></svg>
<svg style="left:934.4px;top:1016.8px" width="9.2" height="7.8" viewBox="0 0 9.2 7.8"><path d="M1.2 1.2 H8.0 L4.6 6.3999999999999995 Z" fill="none" stroke="#4a4a4a" stroke-width="1" stroke-linejoin="round"/></svg>
<svg style="left:1234.4px;top:1016.8px" width="9.2" height="7.8" viewBox="0 0 9.2 7.8"><path d="M1.2 1.2 H8.0 L4.6 6.3999999999999995 Z" fill="none" stroke="#4a4a4a" stroke-width="1" stroke-linejoin="round"/></svg>
<svg style="left:1454.3px;top:1016.8px" width="9.2" height="7.8" viewBox="0 0 9.2 7.8"><path d="M1.2 1.2 H8.0 L4.6 6.3999999999999995 Z" fill="none" stroke="#4a4a4a" stroke-width="1" stroke-linejoin="round"/></svg>
<svg style="left:980px;top:1066px" width="28" height="12" viewBox="0 0 28 12"><path d="M3.2 1.2 H8.7 Q10.5 1.2 11.4 2.5 Q12.4 5.6 14 5.6 Q15.6 5.6 16.6 2.5 Q17.6 1.2 19.4 1.2 H24.6 Q26 1.2 26 2.6 V9 Q26 10.4 24.6 10.4 H3.2 Q1.8 10.4 1.8 9 V2.6 Q1.8 1.2 3.2 1.2 Z" fill="none" stroke="#666" stroke-width="1.5"/></svg>
<div class="a" style="left:832.6px;top:1089.90px;font-size:13px;line-height:13px;font-weight:400;color:#666;letter-spacing:0px">Žádné záznamy. V tomto seznamu nemáme co zobrazit.</div>
<div class="a" style="left:0;top:1148px;width:1916px;height:3px;background:#f2f2f2"></div>
</body></html>
